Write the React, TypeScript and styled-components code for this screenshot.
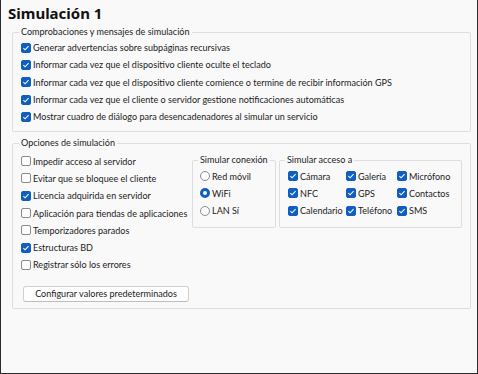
import React from 'react'
import styled, { createGlobalStyle } from 'styled-components'

const GlobalStyle = createGlobalStyle`
  html, body {
    margin: 0;
    padding: 0;
    background: #f9f9f9;
  }
  body {
    font-family: Lato, "Noto Sans", sans-serif;
    font-size: 9.05px;
    color: #1b1b1b;
  }
`

const Window = styled.div`
  width: 478px;
  height: 374px;
  box-sizing: border-box;
  background: #f9f9f9;
  border: 1px solid #2c2c2c;
  border-top: none;
  padding: 0 6px 0 11px;
  display: flex;
  flex-direction: column;
`

const Title = styled.h1`
  margin: 0 0 0 -4px;
  padding-top: 3px;
  height: 22px;
  font-family: "Noto Sans", sans-serif;
  font-size: 15px;
  line-height: 20px;
  font-weight: 700;
  color: #111;
`

const Group = styled.fieldset<{ $gapTop?: number; $top?: number; $bottom?: number }>`
  margin: ${p => p.$gapTop ?? 0}px 0 0 0;
  padding: ${p => p.$top ?? 0}px 8px ${p => p.$bottom ?? 4}px 8px;
  border: 1px solid #dedede;
  border-radius: 2px;
  min-width: 0;
`

const Legend = styled.legend`
  padding: 0 2px;
  margin-left: -2px;
  line-height: 14px;
  white-space: nowrap;
  color: #1b1b1b;
`

const Row = styled.label`
  display: flex;
  align-items: center;
  gap: 2px;
  height: 17.3px;
  white-space: nowrap;
`

const Box = styled.span<{ $checked?: boolean }>`
  flex: none;
  width: 10px;
  height: 10px;
  box-sizing: border-box;
  border-radius: 2px;
  border: 1px solid ${p => (p.$checked ? '#0f5ec0' : '#8b8b8b')};
  background: ${p => (p.$checked ? '#0f5ec0' : '#fdfdfd')};
  display: flex;
  align-items: center;
  justify-content: center;
`

const RadioDot = styled.span<{ $checked?: boolean }>`
  flex: none;
  width: 10px;
  height: 10px;
  box-sizing: border-box;
  border-radius: 50%;
  border: ${p => (p.$checked ? '3px solid #0f5ec0' : '1px solid #8b8b8b')};
  background: #fdfdfd;
`

const OptionsBody = styled.div`
  display: flex;
  align-items: flex-start;
`

const LeftColumn = styled.div`
  width: 172px;
  display: flex;
  flex-direction: column;
`

const SubGroup = styled.fieldset<{ $width: number }>`
  width: ${p => p.$width}px;
  box-sizing: border-box;
  margin: 1px 0 0 0;
  padding: 0 7px 8px 7px;
  border: 1px solid #dedede;
  border-radius: 2px;
  min-width: 0;
`

const SubGroups = styled.div`
  display: flex;
  gap: 3px;
`

const AccessGrid = styled.div`
  display: grid;
  grid-template-columns: 58px 51px 60px;
  margin-left: 1px;
`

const Button = styled.button`
  margin-top: 12px;
  width: 166px;
  height: 16px;
  padding: 0;
  box-sizing: border-box;
  border: 1px solid #d0d0d0;
  border-bottom-color: #bdbdbd;
  border-radius: 3px;
  background: #fefefe;
  font: inherit;
  color: #1b1b1b;
  margin-left: 2px;
`

function Check({ checked, children }: { checked?: boolean; children: React.ReactNode }) {
  return (
    <Row>
      <Box $checked={checked}>
        {checked && (
          <svg width="8" height="8" viewBox="0 0 8 8">
            <path d="M1.4 4.2 L3.1 5.8 L6.6 2.2" fill="none" stroke="#fff" strokeWidth="1.1" />
          </svg>
        )}
      </Box>
      {children}
    </Row>
  )
}

function Radio({ checked, children }: { checked?: boolean; children: React.ReactNode }) {
  return (
    <Row>
      <RadioDot $checked={checked} />
      {children}
    </Row>
  )
}

const checks = [
  'Generar advertencias sobre subpáginas recursivas',
  'Informar cada vez que el dispositivo cliente oculte el teclado',
  'Informar cada vez que el dispositivo cliente comience o termine de recibir información GPS',
  'Informar cada vez que el cliente o servidor gestione notificaciones automáticas',
  'Mostrar cuadro de diálogo para desencadenadores al simular un servicio',
]

const options: [string, boolean][] = [
  ['Impedir acceso al servidor', false],
  ['Evitar que se bloquee el cliente', false],
  ['Licencia adquirida en servidor', true],
  ['Aplicación para tiendas de aplicaciones', false],
  ['Temporizadores parados', false],
  ['Estructuras BD', true],
  ['Registrar sólo los errores', false],
]

const access = ['Cámara', 'Galería', 'Micrófono', 'NFC', 'GPS', 'Contactos', 'Calendario', 'Teléfono', 'SMS']

export default function App() {
  return (
    <>
      <GlobalStyle />
      <Window>
        <Title>Simulación 1</Title>
        <Group $bottom={6}>
          <Legend>Comprobaciones y mensajes de simulación</Legend>
          {checks.map(c => (
            <Check key={c} checked>{c}</Check>
          ))}
        </Group>
        <Group $gapTop={4} $top={2} $bottom={6}>
          <Legend>Opciones de simulación</Legend>
          <OptionsBody>
            <LeftColumn>
              {options.map(([t, c]) => (
                <Check key={t} checked={c}>{t}</Check>
              ))}
              <Button>Configurar valores predeterminados</Button>
            </LeftColumn>
            <SubGroups>
              <SubGroup $width={84}>
                <Legend>Simular conexión</Legend>
                <Radio>Red móvil</Radio>
                <Radio checked>WiFi</Radio>
                <Radio>LAN Sí</Radio>
              </SubGroup>
              <SubGroup $width={183}>
                <Legend>Simular acceso a</Legend>
                <AccessGrid>
                  {access.map(a => (
                    <Check key={a} checked>{a}</Check>
                  ))}
                </AccessGrid>
              </SubGroup>
            </SubGroups>
          </OptionsBody>
        </Group>
      </Window>
    </>
  )
}
